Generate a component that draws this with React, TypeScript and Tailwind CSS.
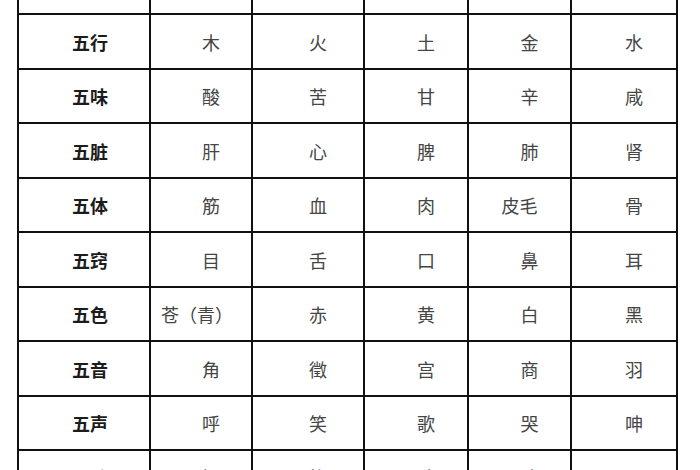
import React from "react";

type Row = { head: string; cells: string[]; h: string };

const ROWS: Row[] = [
  { head: "五行", cells: ["木", "火", "土", "金", "水"], h: "h-[53px]" },
  { head: "五味", cells: ["酸", "苦", "甘", "辛", "咸"], h: "h-[52px]" },
  { head: "五脏", cells: ["肝", "心", "脾", "肺", "肾"], h: "h-[53px]" },
  { head: "五体", cells: ["筋", "血", "肉", "皮毛", "骨"], h: "h-[52px]" },
  { head: "五窍", cells: ["目", "舌", "口", "鼻", "耳"], h: "h-[53px]" },
  { head: "五色", cells: ["苍（青）", "赤", "黄", "白", "黑"], h: "h-[52px]" },
  { head: "五音", cells: ["角", "徵", "宫", "商", "羽"], h: "h-[53px]" },
  { head: "五声", cells: ["呼", "笑", "歌", "哭", "呻"], h: "h-[52px]" },
  { head: "五动", cells: ["握", "忧", "哕", "咳", "栗"], h: "h-[52px]" },
];

function Cell({ text, head, h }: { text: string; head?: boolean; h: string }) {
  const single = [...text].length === 1;
  return (
    <div
      className={
        "flex items-center justify-center bg-white text-[18px] leading-none " +
        h +
        " " +
        (head
          ? "pl-[12px] font-bold text-[#1c1c1c]"
          : single
            ? "pl-[20px] text-[#454545]"
            : text.length > 2
              ? "pr-[8px] text-[#454545]"
              : "text-[#454545]")
      }
    >
      {text}
    </div>
  );
}

export default function App() {
  return (
    <div
      className="h-[470px] w-[700px] overflow-hidden bg-white"
      style={{ fontFamily: '"Noto Sans CJK SC", "Noto Sans", sans-serif' }}
    >
      <div className="ml-[17px] grid w-[661px] grid-cols-[130px_100px_110px_102px_101px_104px] gap-[2px] bg-[#111] px-[2px]">
        {/* partial row cut off at the top */}
        {Array.from({ length: 6 }).map((_, i) => (
          <div key={"top" + i} className="h-[13px] bg-white" />
        ))}
        {ROWS.map((row) => (
          <React.Fragment key={row.head}>
            <Cell text={row.head} head h={row.h} />
            {row.cells.map((c, i) => (
              <Cell key={row.head + i} text={c} h={row.h} />
            ))}
          </React.Fragment>
        ))}
      </div>
    </div>
  );
}
